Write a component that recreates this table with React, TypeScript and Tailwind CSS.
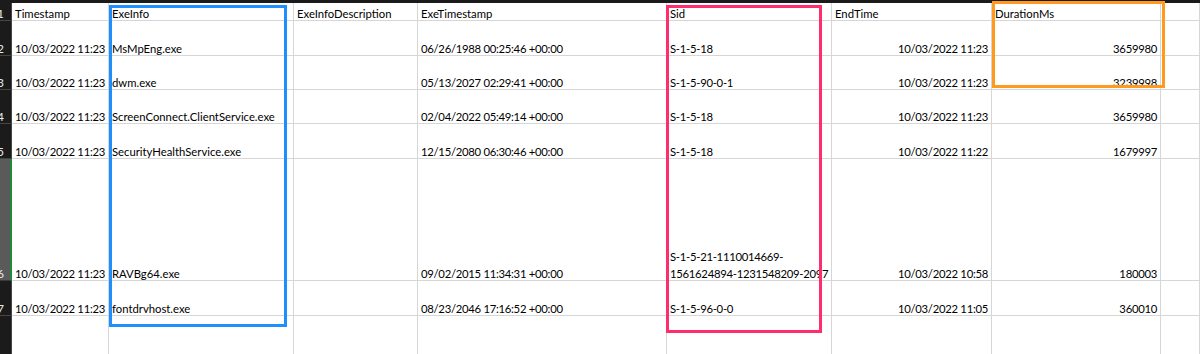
import React from "react";

type Align = "l" | "r";
const cols = [97, 185, 124, 249, 165, 160, 169, 39];
const aligns: Align[] = ["r", "l", "l", "l", "l", "r", "r", "l"];
const numeric = [true, false, false, true, true, true, true, false];

const header = ["Timestamp", "ExeInfo", "ExeInfoDescription", "ExeTimestamp", "Sid", "EndTime", "DurationMs", ""];

const rows: { n: string; h: number; sel?: boolean; cells: (string | string[])[] }[] = [
  { n: "2", h: 35, cells: ["10/03/2022 11:23", "MsMpEng.exe", "", "06/26/1988 00:25:46 +00:00", "S-1-5-18", "10/03/2022 11:23", "3659980", ""] },
  { n: "3", h: 34, cells: ["10/03/2022 11:23", "dwm.exe", "", "05/13/2027 02:29:41 +00:00", "S-1-5-90-0-1", "10/03/2022 11:23", "3239998", ""] },
  { n: "4", h: 34, cells: ["10/03/2022 11:23", "ScreenConnect.ClientService.exe", "", "02/04/2022 05:49:14 +00:00", "S-1-5-18", "10/03/2022 11:23", "3659980", ""] },
  { n: "5", h: 35, cells: ["10/03/2022 11:23", "SecurityHealthService.exe", "", "12/15/2080 06:30:46 +00:00", "S-1-5-18", "10/03/2022 11:22", "1679997", ""] },
  { n: "6", h: 122, sel: true, cells: ["10/03/2022 11:23", "RAVBg64.exe", "", "09/02/2015 11:34:31 +00:00", ["S-1-5-21-1110014669-", "1561624894-1231548209-2097"], "10/03/2022 10:58", "180003", ""] },
  { n: "7", h: 35, cells: ["10/03/2022 11:23", "fontdrvhost.exe", "", "08/23/2046 17:16:52 +00:00", "S-1-5-96-0-0", "10/03/2022 11:05", "360010", ""] },
  { n: "", h: 40, cells: ["", "", "", "", "", "", "", ""] },
];

function Cell({ w, a, num, children }: { w: number; a: Align; num?: boolean; children?: React.ReactNode }) {
  return (
    <div
      className={`flex h-full shrink-0 flex-col justify-end border-r border-b border-[#d6d6d6] px-[3px] leading-[17px] whitespace-nowrap ${a === "r" ? "items-end" : "items-start"} ${num ? "tracking-[-0.28px]" : ""}`}
      style={{ width: w }}
    >
      <div className={`flex translate-y-[2px] flex-col ${a === "r" ? "items-end" : "items-start"}`}>{children}</div>
    </div>
  );
}

function RowHead({ n, sel }: { n: string; sel?: boolean }) {
  return (
    <div
      className={`flex h-full w-[12px] shrink-0 items-end overflow-hidden border-b text-[12px] leading-[17px] text-[#e8e8e8] ${sel ? "border-r-2 border-r-[#1e8a3c] border-b-[#3a3a3a] bg-[#5a5a5a]" : "border-r border-[#454545] bg-[#1b1b1b]"}`}
    >
      <span className="-ml-[3px] translate-y-[2px]">{n}</span>
    </div>
  );
}

export default function App() {
  return (
    <div
      className="relative h-[354px] w-[1200px] overflow-hidden bg-white text-[11.3px] text-black"
      style={{ fontFamily: "Lato, 'Open Sans', sans-serif" }}
    >
      <div className="h-[3px] w-full bg-[#1b1b1b]" />
      <div className="flex h-[18px]">
        <RowHead n="1" />
        {header.map((t, i) => (
          <Cell key={i} w={cols[i]} a="l">
            <span>{t}</span>
          </Cell>
        ))}
      </div>
      {rows.map((r, ri) => (
        <div key={ri} className="flex" style={{ height: r.h }}>
          <RowHead n={r.n} sel={r.sel} />
          {r.cells.map((c, i) => (
            <Cell key={i} w={cols[i]} a={aligns[i]} num={numeric[i]}>
              {Array.isArray(c) ? c.map((l, k) => <span key={k}>{l}</span>) : <span>{c}</span>}
            </Cell>
          ))}
        </div>
      ))}

      <div className="pointer-events-none absolute left-[109px] top-[5px] h-[322px] w-[178px] border-[3px] border-[#1f8fff]" />
      <div className="pointer-events-none absolute left-[666px] top-[5px] h-[328px] w-[156px] border-[3px] border-[#ff2d6e]" />
      <div className="pointer-events-none absolute left-[992px] top-[1px] h-[87px] w-[173px] border-[3px] border-[#ff9a1f]" />
    </div>
  );
}
